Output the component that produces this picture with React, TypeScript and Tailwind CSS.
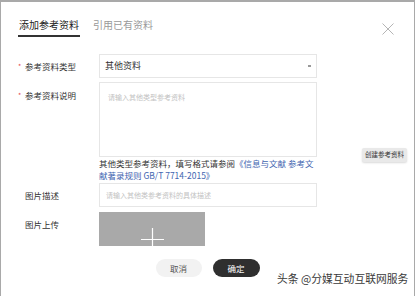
const FONT = { fontFamily: '"Noto Sans CJK SC", "Noto Sans", sans-serif' };

function Label({ text, required, h }: { text: string; required?: boolean; h: string }) {
  return (
    <div className={`w-[81px] shrink-0 flex items-center ${h} text-[8.5px] text-[#333]`}>
      <span className={`w-[7px] text-[7px] text-[#e5484d] ${required ? "" : "invisible"}`}>*</span>
      <span>{text}</span>
    </div>
  );
}

export default function App() {
  return (
    <div className="w-[417px] h-[296px] bg-white relative overflow-hidden" style={FONT}>
      <div className="w-[415px] h-[296px] border-t-2 border-l border-r border-[#a9a9a9] relative px-[17px]">
        {/* Tabs */}
        <div className="flex items-end gap-[13px] pt-[16px]">
          <div className="text-[10px] leading-[14px] text-[#222] pb-[3px] border-b-2 border-[#333] px-[1px]">
            添加参考资料
          </div>
          <div className="text-[10px] leading-[14px] text-[#999] pb-[5px]">引用已有资料</div>
        </div>
        <svg className="absolute right-[20px] top-[21px]" width="12" height="12" viewBox="0 0 12 12">
          <path d="M0.5 0.5 L11.5 11.5 M11.5 0.5 L0.5 11.5" stroke="#b5b5b5" strokeWidth="1" />
        </svg>

        {/* Form */}
        <div className="mt-[17px] flex flex-col">
          <div className="flex">
            <Label text="参考资料类型" required h="h-[24px]" />
            <div className="w-[218px] h-[24px] border border-[#e6e6e6] flex items-center justify-between pl-[5px] pr-[5px]">
              <span className="text-[9px] text-[#333]">其他资料</span>
              <span className="w-[3px] h-[2px] bg-[#999]" />
            </div>
          </div>

          <div className="flex mt-[4px]">
            <Label text="参考资料说明" required h="h-[26px]" />
            <div className="w-[218px] shrink-0 flex flex-col">
              <div className="h-[75px] border border-[#e6e6e6] pl-[8px] pt-[9px] text-[7px] leading-[10px] text-[#c2c2c2]">
                请输入其他类型参考资料
              </div>
              <div className="text-[8.5px] leading-[12px] text-[#333]">
                <div>
                  其他类型参考资料，填写格式请参阅<span className="text-[#4265b0]">《信息与文献 参考文</span>
                </div>
                <div className="text-[#4265b0]">献著录规则 GB/T 7714-2015》</div>
              </div>
            </div>
            <div className="ml-[45px] mt-[66px] h-[14px] px-[3px] rounded-[2px] bg-[#e9e9e9] shadow-[0_1px_2px_rgba(0,0,0,0.15)] flex items-center whitespace-nowrap text-[6.5px] text-[#333] self-start">
              创建参考资料
            </div>
          </div>

          <div className="flex mt-[2px]">
            <Label text="图片描述" h="h-[24px]" />
            <div className="w-[218px] h-[24px] border border-[#e6e6e6] flex items-center pl-[6px] text-[7px] text-[#c2c2c2]">
              请输入其他类参考资料的具体描述
            </div>
          </div>

          <div className="flex mt-[5px]">
            <Label text="图片上传" h="h-[24px]" />
            <div className="w-[106px] h-[34px] bg-[#a9a9a9] relative overflow-hidden">
              <svg className="absolute left-[42px] top-[16px]" width="23" height="23" viewBox="0 0 23 23">
                <path d="M0 11.5 H23 M11.5 0 V23" stroke="#fff" strokeWidth="1.2" />
              </svg>
            </div>
          </div>

          <div className="flex justify-center gap-[11px] mt-[13px]">
            <div className="w-[46px] h-[18px] rounded-full bg-[#f2f2f2] flex items-center justify-center text-[8.5px] text-[#555]">
              取消
            </div>
            <div className="w-[47px] h-[18px] rounded-full bg-[#2f2f2f] flex items-center justify-center text-[8.5px] text-white">
              确定
            </div>
          </div>
        </div>
      </div>

      {/* Watermark */}
      <div
        className="absolute left-[277px] top-[270px] text-[10.8px] leading-[16px] text-[#3a3a3a] whitespace-nowrap"
        style={{ textShadow: "0 0 2px #fff, 0 0 2px #fff" }}
      >
        头条 @分媒互动互联网服务
      </div>
    </div>
  );
}
